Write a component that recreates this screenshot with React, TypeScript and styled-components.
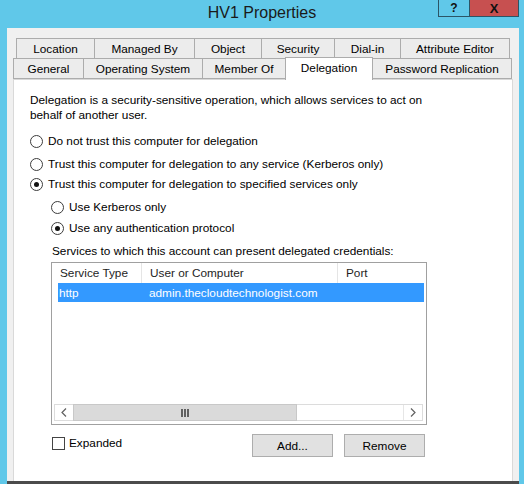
import styled, { createGlobalStyle } from "styled-components";

const GlobalStyle = createGlobalStyle`
  html, body {
    margin: 0;
    padding: 0;
    background: #ffffff;
  }
  body {
    font-family: "Liberation Sans", Arial, sans-serif;
    font-size: 11.8px;
    color: #000000;
  }
  * {
    box-sizing: border-box;
  }
`;

const Frame = styled.div`
  width: 524px;
  height: 484px;
  overflow: hidden;
  display: flex;
  flex-direction: column;
  background: #60c8e9;
`;

const TitleBar = styled.div`
  height: 28px;
  flex-shrink: 0;
  display: grid;
  grid-template-columns: 1fr auto 1fr;
`;

const Title = styled.div`
  grid-column: 2;
  padding-top: 3px;
  font-size: 16px;
  line-height: 20px;
  color: #1a1a1a;
`;

const CaptionButtons = styled.div`
  grid-column: 3;
  justify-self: end;
  align-self: start;
  display: flex;
  margin-right: 5px;
`;

const CaptionButton = styled.div<{ $close?: boolean }>`
  width: ${(p) => (p.$close ? 49 : 32)}px;
  height: 17px;
  display: flex;
  align-items: center;
  justify-content: center;
  background: ${(p) => (p.$close ? "#c75050" : "#60c8e9")};
  border: 1px solid #2b5566;
  border-top: none;
  ${(p) => p.$close && "border-left: none;"}
  font-weight: bold;
  font-size: ${(p) => (p.$close ? 13 : 12)}px;
  color: #111111;
  line-height: 1;
`;

const Body = styled.div`
  flex: 1;
  margin: 0 5px 0 7px;
  display: flex;
  flex-direction: column;
  padding: 10px 6px 0 6px;
  background: #f0f0f0;
  border-bottom: 3px solid #4b4b4b;
`;

const TabRow = styled.div<{ $indent: number }>`
  display: flex;
  align-items: flex-end;
  height: 21px;
  padding-left: ${(p) => p.$indent}px;
  & + & {
    margin-top: -1px;
  }
`;

const Tab = styled.div<{ $selected?: boolean }>`
  position: relative;
  height: ${(p) => (p.$selected ? 23 : 21)}px;
  margin-left: -1px;
  margin-bottom: ${(p) => (p.$selected ? -1 : 0)}px;
  z-index: ${(p) => (p.$selected ? 2 : 1)};
  display: flex;
  align-items: center;
  justify-content: center;
  padding-bottom: ${(p) => (p.$selected ? 3 : 0)}px;
  border: 1px solid #acacac;
  border-bottom: ${(p) => (p.$selected ? "none" : "1px solid #acacac")};
  background: ${(p) => (p.$selected ? "#ffffff" : "#ececec")};
  white-space: nowrap;
  &:first-child {
    margin-left: 0;
  }
`;

const Panel = styled.div`
  flex: 1;
  position: relative;
  z-index: 1;
  background: #ffffff;
  border: 1px solid #d9d9d9;
  border-bottom: none;
  padding: 13px 16px 0 16px;
  display: flex;
  flex-direction: column;
`;

const Intro = styled.p`
  margin: 0;
  width: 410px;
  line-height: 15px;
`;

const RadioRow = styled.div<{ $gap: number }>`
  display: flex;
  align-items: center;
  height: 20px;
  margin-top: ${(p) => p.$gap}px;
`;

const RadioCircle = styled.span<{ $checked?: boolean }>`
  width: 13px;
  height: 13px;
  border-radius: 50%;
  border: 1px solid #3c3c3c;
  background: #ffffff;
  margin-right: 5px;
  display: flex;
  align-items: center;
  justify-content: center;
  flex-shrink: 0;
  &::after {
    content: "";
    width: 5px;
    height: 5px;
    border-radius: 50%;
    background: ${(p) => (p.$checked ? "#111111" : "transparent")};
  }
`;

const Indented = styled.div`
  margin-left: 21px;
  display: flex;
  flex-direction: column;
`;

const ListLabel = styled.div`
  margin: 6px 0 0 1px;
  line-height: 15px;
`;

const ListBox = styled.div`
  margin-top: 3px;
  width: 376px;
  height: 163px;
  border: 1px solid #a0a0a0;
  background: #ffffff;
  display: flex;
  flex-direction: column;
`;

const HeaderRow = styled.div`
  display: flex;
  height: 20px;
  flex-shrink: 0;
`;

const HeaderCell = styled.div<{ $width?: number }>`
  ${(p) => (p.$width ? `width: ${p.$width}px;` : "flex: 1;")}
  padding-left: 8px;
  display: flex;
  align-items: center;
  border-right: 1px solid #e5e5e5;
  color: #1e1e1e;
  &:last-child {
    border-right: none;
  }
`;

const Rows = styled.div`
  flex: 1;
  padding: 0 2px 0 6px;
`;

const ItemRow = styled.div<{ $selected?: boolean }>`
  display: flex;
  height: 19px;
  align-items: center;
  background: ${(p) => (p.$selected ? "#3399ff" : "transparent")};
  color: ${(p) => (p.$selected ? "#ffffff" : "#000000")};
`;

const ItemCell = styled.div<{ $width: number; $pad: number }>`
  width: ${(p) => p.$width}px;
  padding-left: ${(p) => p.$pad}px;
  white-space: nowrap;
`;

const ScrollBar = styled.div`
  margin: 0 3px 3px 2px;
  height: 17px;
  display: flex;
  border: 1px solid #dcdcdc;
  background: #ffffff;
`;

const ScrollArrow = styled.div`
  width: 18px;
  display: flex;
  align-items: center;
  justify-content: center;
  background: #ffffff;
`;

const Thumb = styled.div`
  width: 224px;
  display: flex;
  align-items: center;
  justify-content: center;
  background: #dadada;
  border: 1px solid #c8c8c8;
  margin: -1px 0;
`;

const Track = styled.div`
  flex: 1;
  background: #ffffff;
  border-right: 1px solid #e6e6e6;
`;

const BottomRow = styled.div`
  margin-top: 9px;
  width: 376px;
  display: flex;
  justify-content: space-between;
  align-items: flex-start;
`;

const CheckLabel = styled.label`
  margin: 3px 0 0 1px;
  display: flex;
  align-items: center;
  gap: 4px;
  line-height: 13px;
`;

const CheckBox = styled.span`
  width: 13px;
  height: 13px;
  border: 1px solid #444444;
  background: #ffffff;
`;

const ButtonGroup = styled.div`
  display: flex;
  gap: 11px;
  margin-right: 2px;
`;

const Button = styled.div`
  width: 81px;
  height: 23px;
  display: flex;
  align-items: center;
  justify-content: center;
  border: 1px solid #adadad;
  background: #e1e1e1;
`;

const topTabs = [
  { label: "Location", width: 79 },
  { label: "Managed By", width: 101 },
  { label: "Object", width: 68 },
  { label: "Security", width: 74 },
  { label: "Dial-in", width: 67 },
  { label: "Attribute Editor", width: 110 },
];

const frontTabs = [
  { label: "General", width: 71 },
  { label: "Operating System", width: 120 },
  { label: "Member Of", width: 84 },
  { label: "Delegation", width: 88, selected: true },
  { label: "Password Replication", width: 140 },
];

const Chevron = ({ dir }: { dir: "left" | "right" }) => (
  <svg width="6" height="9" viewBox="0 0 6 9">
    <polyline
      points={dir === "left" ? "5,0.5 1,4.5 5,8.5" : "1,0.5 5,4.5 1,8.5"}
      fill="none"
      stroke="#606060"
      strokeWidth="1.2"
    />
  </svg>
);

const Grip = () => (
  <svg width="8" height="8" viewBox="0 0 8 8">
    <rect x="0" y="0" width="2" height="8" fill="#606060" />
    <rect x="3" y="0" width="2" height="8" fill="#606060" />
    <rect x="6" y="0" width="2" height="8" fill="#606060" />
  </svg>
);

export default function App() {
  return (
    <>
      <GlobalStyle />
      <Frame>
        <TitleBar>
          <Title>HV1 Properties</Title>
          <CaptionButtons>
            <CaptionButton>?</CaptionButton>
            <CaptionButton $close>X</CaptionButton>
          </CaptionButtons>
        </TitleBar>
        <Body>
          <TabRow $indent={3}>
            {topTabs.map((t) => (
              <Tab key={t.label} style={{ width: t.width }}>
                {t.label}
              </Tab>
            ))}
          </TabRow>
          <TabRow $indent={0}>
            {frontTabs.map((t) => (
              <Tab key={t.label} $selected={t.selected} style={{ width: t.width }}>
                {t.label}
              </Tab>
            ))}
          </TabRow>
          <Panel>
            <Intro>
              Delegation is a security-sensitive operation, which allows services to act on
              behalf of another user.
            </Intro>
            <RadioRow $gap={8}>
              <RadioCircle />
              Do not trust this computer for delegation
            </RadioRow>
            <RadioRow $gap={3}>
              <RadioCircle />
              Trust this computer for delegation to any service (Kerberos only)
            </RadioRow>
            <RadioRow $gap={0}>
              <RadioCircle $checked />
              Trust this computer for delegation to specified services only
            </RadioRow>
            <Indented>
              <RadioRow $gap={3}>
                <RadioCircle />
                Use Kerberos only
              </RadioRow>
              <RadioRow $gap={1}>
                <RadioCircle $checked />
                Use any authentication protocol
              </RadioRow>
              <ListLabel>Services to which this account can present delegated credentials:</ListLabel>
              <ListBox>
                <HeaderRow>
                  <HeaderCell $width={90}>Service Type</HeaderCell>
                  <HeaderCell $width={196}>User or Computer</HeaderCell>
                  <HeaderCell>Port</HeaderCell>
                </HeaderRow>
                <Rows>
                  <ItemRow $selected>
                    <ItemCell $width={84} $pad={1}>
                      http
                    </ItemCell>
                    <ItemCell $width={196} $pad={7}>
                      admin.thecloudtechnologist.com
                    </ItemCell>
                  </ItemRow>
                </Rows>
                <ScrollBar>
                  <ScrollArrow>
                    <Chevron dir="left" />
                  </ScrollArrow>
                  <Thumb>
                    <Grip />
                  </Thumb>
                  <Track />
                  <ScrollArrow>
                    <Chevron dir="right" />
                  </ScrollArrow>
                </ScrollBar>
              </ListBox>
              <BottomRow>
                <CheckLabel>
                  <CheckBox />
                  Expanded
                </CheckLabel>
                <ButtonGroup>
                  <Button>Add...</Button>
                  <Button>Remove</Button>
                </ButtonGroup>
              </BottomRow>
            </Indented>
          </Panel>
        </Body>
      </Frame>
    </>
  );
}
